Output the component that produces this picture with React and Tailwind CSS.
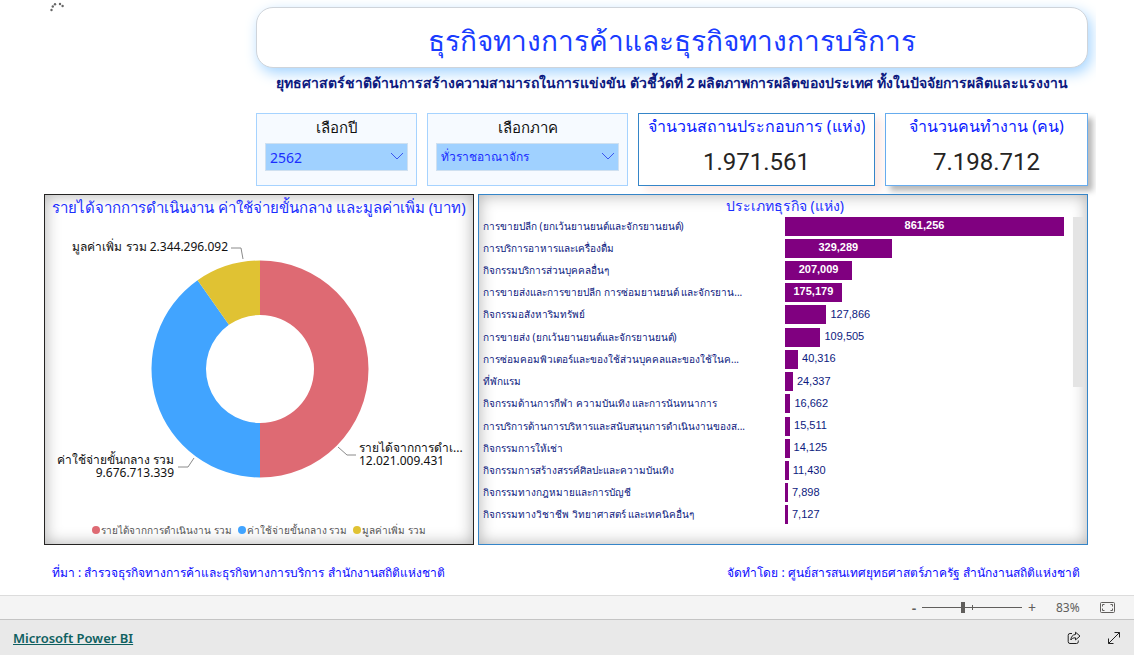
import React, { useState } from "react";
import { clsx } from "clsx";

const BUSINESS_TYPES = [
  { name: "การขายปลีก (ยกเว้นยานยนต์และจักรยานยนต์)", value: 861256 },
  { name: "การบริการอาหารและเครื่องดื่ม", value: 329289 },
  { name: "กิจกรรมบริการส่วนบุคคลอื่นๆ", value: 207009 },
  { name: "การขายส่งและการขายปลีก การซ่อมยานยนต์ และจักรยาน...", value: 175179 },
  { name: "กิจกรรมอสังหาริมทรัพย์", value: 127866 },
  { name: "การขายส่ง (ยกเว้นยานยนต์และจักรยานยนต์)", value: 109505 },
  { name: "การซ่อมคอมพิวเตอร์และของใช้ส่วนบุคคลและของใช้ในค...", value: 40316 },
  { name: "ที่พักแรม", value: 24337 },
  { name: "กิจกรรมด้านการกีฬา ความบันเทิง และการนันทนาการ", value: 16662 },
  { name: "การบริการด้านการบริหารและสนับสนุนการดำเนินงานของส...", value: 15511 },
  { name: "กิจกรรมการให้เช่า", value: 14125 },
  { name: "กิจกรรมการสร้างสรรค์ศิลปะและความบันเทิง", value: 11430 },
  { name: "กิจกรรมทางกฎหมายและการบัญชี", value: 7898 },
  { name: "กิจกรรมทางวิชาชีพ วิทยาศาสตร์ และเทคนิคอื่นๆ", value: 7127 },
];

const MAX_VALUE = BUSINESS_TYPES[0].value;

// Values above this fit their label inside the bar
const INSIDE_LIMIT = 150000;

const SLICES = [
  { name: "รายได้จากการดำเนินงาน รวม", value: 12021009431, color: "#de6a73" },
  { name: "ค่าใช้จ่ายขั้นกลาง รวม", value: 9676713339, color: "#41a4ff" },
  { name: "มูลค่าเพิ่ม รวม", value: 2344296092, color: "#e0c233" },
];

function slicePath(start, end, cx, cy, outer, inner) {
  const point = (t, r) => {
    const a = t * 2 * Math.PI;
    return `${cx + r * Math.sin(a)} ${cy - r * Math.cos(a)}`;
  };
  const large = end - start > 0.5 ? 1 : 0;
  return `M${point(start, outer)} A${outer} ${outer} 0 ${large} 1 ${point(end, outer)} L${point(end, inner)} A${inner} ${inner} 0 ${large} 0 ${point(start, inner)}Z`;
}

function Slicer({ id, label, options, textClass }) {
  const [value, setValue] = useState(options[0]);

  return (
    <div className="border border-[#a6d3ff] bg-[#f6faff] px-2 pt-[3px] pb-3">
      <label htmlFor={id} className="block text-center text-[15px] leading-5 text-[#111111]">
        {label}
      </label>
      <div className="relative mt-[6px]">
        <select
          id={id}
          value={value}
          onChange={(e) => setValue(e.target.value)}
          className={clsx(
            "block h-7 w-full appearance-none border border-[#cfe0f0] bg-[#a0d1ff] pl-1 text-[#1a2eff] outline-none",
            textClass
          )}
        >
          {options.map((o) => (
            <option key={o}>{o}</option>
          ))}
        </select>
        <svg
          className="pointer-events-none absolute top-[9px] right-1 h-2 w-[14px]"
          viewBox="0 0 14 8"
          fill="none"
          stroke="#3a55f0"
        >
          <path d="M1 1l6 6 6-6" />
        </svg>
      </div>
    </div>
  );
}

function StatCard({ title, value, className }) {
  return (
    <div className={clsx("border bg-white text-center", className)}>
      <h2 className="text-[16px] leading-6 whitespace-nowrap text-[#0a1cff]">{title}</h2>
      <p className="mt-2 font-['Roboto',sans-serif] text-[24px] leading-8 text-[#252423]">{value}</p>
    </div>
  );
}

function DonutChart() {
  const total = SLICES.reduce((sum, s) => sum + s.value, 0);
  let offset = 0;

  return (
    <svg viewBox="0 0 428 300" className="h-[300px] w-full" fontSize="12" fill="#111111">
      {SLICES.map((s) => {
        const start = offset;
        offset += s.value / total;
        return <path key={s.name} d={slicePath(start, offset, 215, 150, 108.5, 54)} fill={s.color} />;
      })}

      {/* Leader lines */}
      <g fill="none" stroke="#8a8a8a">
        <path d="M186 29h10l2 11" />
        <path d="M133 248h10l6-9" />
        <path d="M293 228l9 8h9" />
      </g>

      <text x="183" y="32" textAnchor="end">มูลค่าเพิ่ม รวม 2.344.296.092</text>
      <text x="129" y="245" textAnchor="end">ค่าใช้จ่ายขั้นกลาง รวม</text>
      <text x="129" y="258" textAnchor="end">9.676.713.339</text>
      <text x="314" y="233">รายได้จากการดำเ...</text>
      <text x="314" y="246">12.021.009.431</text>
    </svg>
  );
}

function BarRow({ name, value }) {
  const inside = value > INSIDE_LIMIT;
  const text = value.toLocaleString("en-US");

  return (
    <li className="flex flex-1 items-center">
      <span className="w-[302px] shrink-0 text-[10px] whitespace-nowrap">{name}</span>
      <div className="flex flex-1 items-center font-['Liberation_Sans',sans-serif] text-[11px] leading-4">
        <div
          className="h-[19px] min-w-[3px] shrink-0 bg-[#800080] text-center font-bold text-white"
          style={{ width: `${(value / MAX_VALUE) * 100}%` }}
        >
          {inside && text}
        </div>
        {!inside && <span className="pb-[2px] pl-1">{text}</span>}
      </div>
    </li>
  );
}

function StatusBar() {
  const [zoom, setZoom] = useState(41);

  return (
    <div className="flex h-6 items-center justify-end border-t border-[#dcdcdc] bg-[#f4f4f4] pr-[19px] text-[12px] text-[#605e5c]">
      <button aria-label="Zoom out" className="w-3 text-center text-[14px] font-semibold">-</button>
      <div className="relative mx-[2px] flex h-4 items-center">
        <span className="absolute left-[50px] h-[5px] w-px bg-[#605e5c]" />
        <input
          type="range"
          aria-label="Zoom"
          value={zoom}
          onChange={(e) => setZoom(Number(e.target.value))}
          className="h-px w-[100px] appearance-none bg-[#605e5c] [&::-webkit-slider-thumb]:h-[11px] [&::-webkit-slider-thumb]:w-1 [&::-webkit-slider-thumb]:appearance-none [&::-webkit-slider-thumb]:bg-[#605e5c]"
        />
      </div>
      <button aria-label="Zoom in" className="w-4 text-center text-[14px]">+</button>
      <span className="ml-4 w-6">83%</span>
      <button aria-label="Fit to page" className="ml-5">
        <svg width="15" height="11" viewBox="0 0 15 11" fill="none" stroke="#605e5c">
          <rect x="0.5" y="0.5" width="14" height="10" rx="1" />
          <path d="M2.5 4.5v-2h2M10.5 2.5h2v2M12.5 6.5v2h-2M4.5 8.5h-2v-2" />
        </svg>
      </button>
    </div>
  );
}

export default function App() {
  return (
    <div className="flex min-h-screen flex-col bg-white font-['Noto_Sans',sans-serif]">
      <main className="mr-[38px] flex flex-1 flex-col overflow-hidden pt-[7px] pr-2 pl-11">
        <div className="flex">
          <div className="w-[212px] shrink-0">
            {/* Loading dots */}
            <svg className="-mt-[7px] ml-[6px]" width="16" height="12" viewBox="0 0 16 12" fill="#666666">
              <circle cx="1.5" cy="10" r="1.2" />
              <circle cx="2.8" cy="6.5" r="1.2" />
              <circle cx="5" cy="4.3" r="1.2" />
              <circle cx="10" cy="4" r="1.2" />
              <circle cx="12.6" cy="6" r="1.2" />
            </svg>
          </div>

          <div className="min-w-0 flex-1">
            <h1 className="flex h-[61px] items-center justify-center rounded-[17px] border border-[#cfd4da] bg-white pt-1 text-[28px] text-[#1a3cff] shadow-[3px_5px_14px_#a4d4ff]">
              ธุรกิจทางการค้าและธุรกิจทางการบริการ
            </h1>
            <p className="mt-[3px] h-6 text-center text-[14px] leading-6 font-bold whitespace-nowrap text-[#0d1a80]">
              ยุทธศาสตร์ชาติด้านการสร้างความสามารถในการแข่งขัน ตัวชี้วัดที่ 2 ผลิตภาพการผลิตของประเทศ ทั้งในปัจจัยการผลิตและแรงงาน
            </p>

            <div className="mt-[18px] grid h-[73px] grid-cols-[161fr_201fr_237fr_203fr] gap-[10px]">
              <Slicer id="year" label="เลือกปี" options={["2562"]} textClass="text-[14px]" />
              <Slicer id="region" label="เลือกภาค" options={["ทั่วราชอาณาจักร"]} textClass="text-[12px]" />
              <StatCard
                title="จำนวนสถานประกอบการ (แห่ง)"
                value="1.971.561"
                className="border-[#3585c8] shadow-[7px_5px_8px_#fdeae6]"
              />
              <StatCard
                title="จำนวนคนทำงาน (คน)"
                value="7.198.712"
                className="border-[#67acee] shadow-[5px_5px_6px_#b8b8b8]"
              />
            </div>
          </div>
        </div>

        <div className="mt-2 grid h-[351px] grid-cols-[430fr_610fr] gap-1">
          <section className="flex flex-col border border-[#252423] bg-white shadow-[inset_0_0_16px_#b0b0b0]">
            <h2 className="text-center text-[15px] leading-6 whitespace-nowrap text-[#1a2eff]">
              รายได้จากการดำเนินงาน ค่าใช้จ่ายขั้นกลาง และมูลค่าเพิ่ม (บาท)
            </h2>
            <DonutChart />
            <ul className="flex justify-center gap-[6px] text-[10px] leading-[22px] text-[#555555]">
              {SLICES.map((s) => (
                <li key={s.name} className="flex items-center gap-px">
                  <span className="size-2 rounded-full" style={{ backgroundColor: s.color }} />
                  {s.name}
                </li>
              ))}
            </ul>
          </section>

          <section className="flex flex-col border border-[#3585c8] bg-white pl-1 shadow-[inset_0_0_16px_#b0b0b0]">
            <h2 className="h-5 text-center text-[14px] leading-[22px] text-[#1a2eff]">ประเภทธุรกิจ (แห่ง)</h2>
            <div className="flex flex-1 pr-[3px] pb-[18px]">
              <ul className="flex flex-1 flex-col text-[#0d1a80]">
                {BUSINESS_TYPES.map((b) => (
                  <BarRow key={b.name} {...b} />
                ))}
              </ul>
              <div className="mt-[2px] ml-[9px] h-[170px] w-[11px] bg-[#e4e4e4]" />
            </div>
          </section>
        </div>

        <div className="mt-4 flex justify-between pr-2 pl-2 text-[12px] leading-6 text-[#0a0aff]">
          <p>ที่มา : สำรวจธุรกิจทางการค้าและธุรกิจทางการบริการ สำนักงานสถิติแห่งชาติ</p>
          <p>จัดทำโดย : ศูนย์สารสนเทศยุทธศาสตร์ภาครัฐ สำนักงานสถิติแห่งชาติ</p>
        </div>
      </main>

      <StatusBar />

      <footer className="flex h-9 items-center justify-between border-t border-[#c4c4c4] bg-[#e9e9e9] pr-[13px] pl-[13px] text-[#222222]">
        <a href="#" className="pt-[3px] text-[13px] font-semibold text-[#0f6060] underline">
          Microsoft Power BI
        </a>
        <div className="flex items-center gap-[26px]">
          <button aria-label="Share">
            <svg width="14" height="14" viewBox="0 0 14 14" fill="none" stroke="currentColor">
              <path d="M5 2.5H3A1.8 1.8 0 0 0 1.2 4.3v6.4a1.8 1.8 0 0 0 1.8 1.8h6.5a1.8 1.8 0 0 0 1.8-1.8V9.5" />
              <path d="M8.5 1.2l4.5 3.9-4.5 3.8V6.8C6.3 6.7 4.8 7.5 3.8 9 4 6 5.5 3.7 8.5 3.5z" strokeLinejoin="round" />
            </svg>
          </button>
          <button aria-label="Full screen">
            <svg width="14" height="14" viewBox="0 0 14 14" fill="none" stroke="currentColor">
              <path d="M1.5 12.5l11-11M7.5 1.5h5v5M1.5 7.5v5h5" />
            </svg>
          </button>
        </div>
      </footer>
    </div>
  );
}
